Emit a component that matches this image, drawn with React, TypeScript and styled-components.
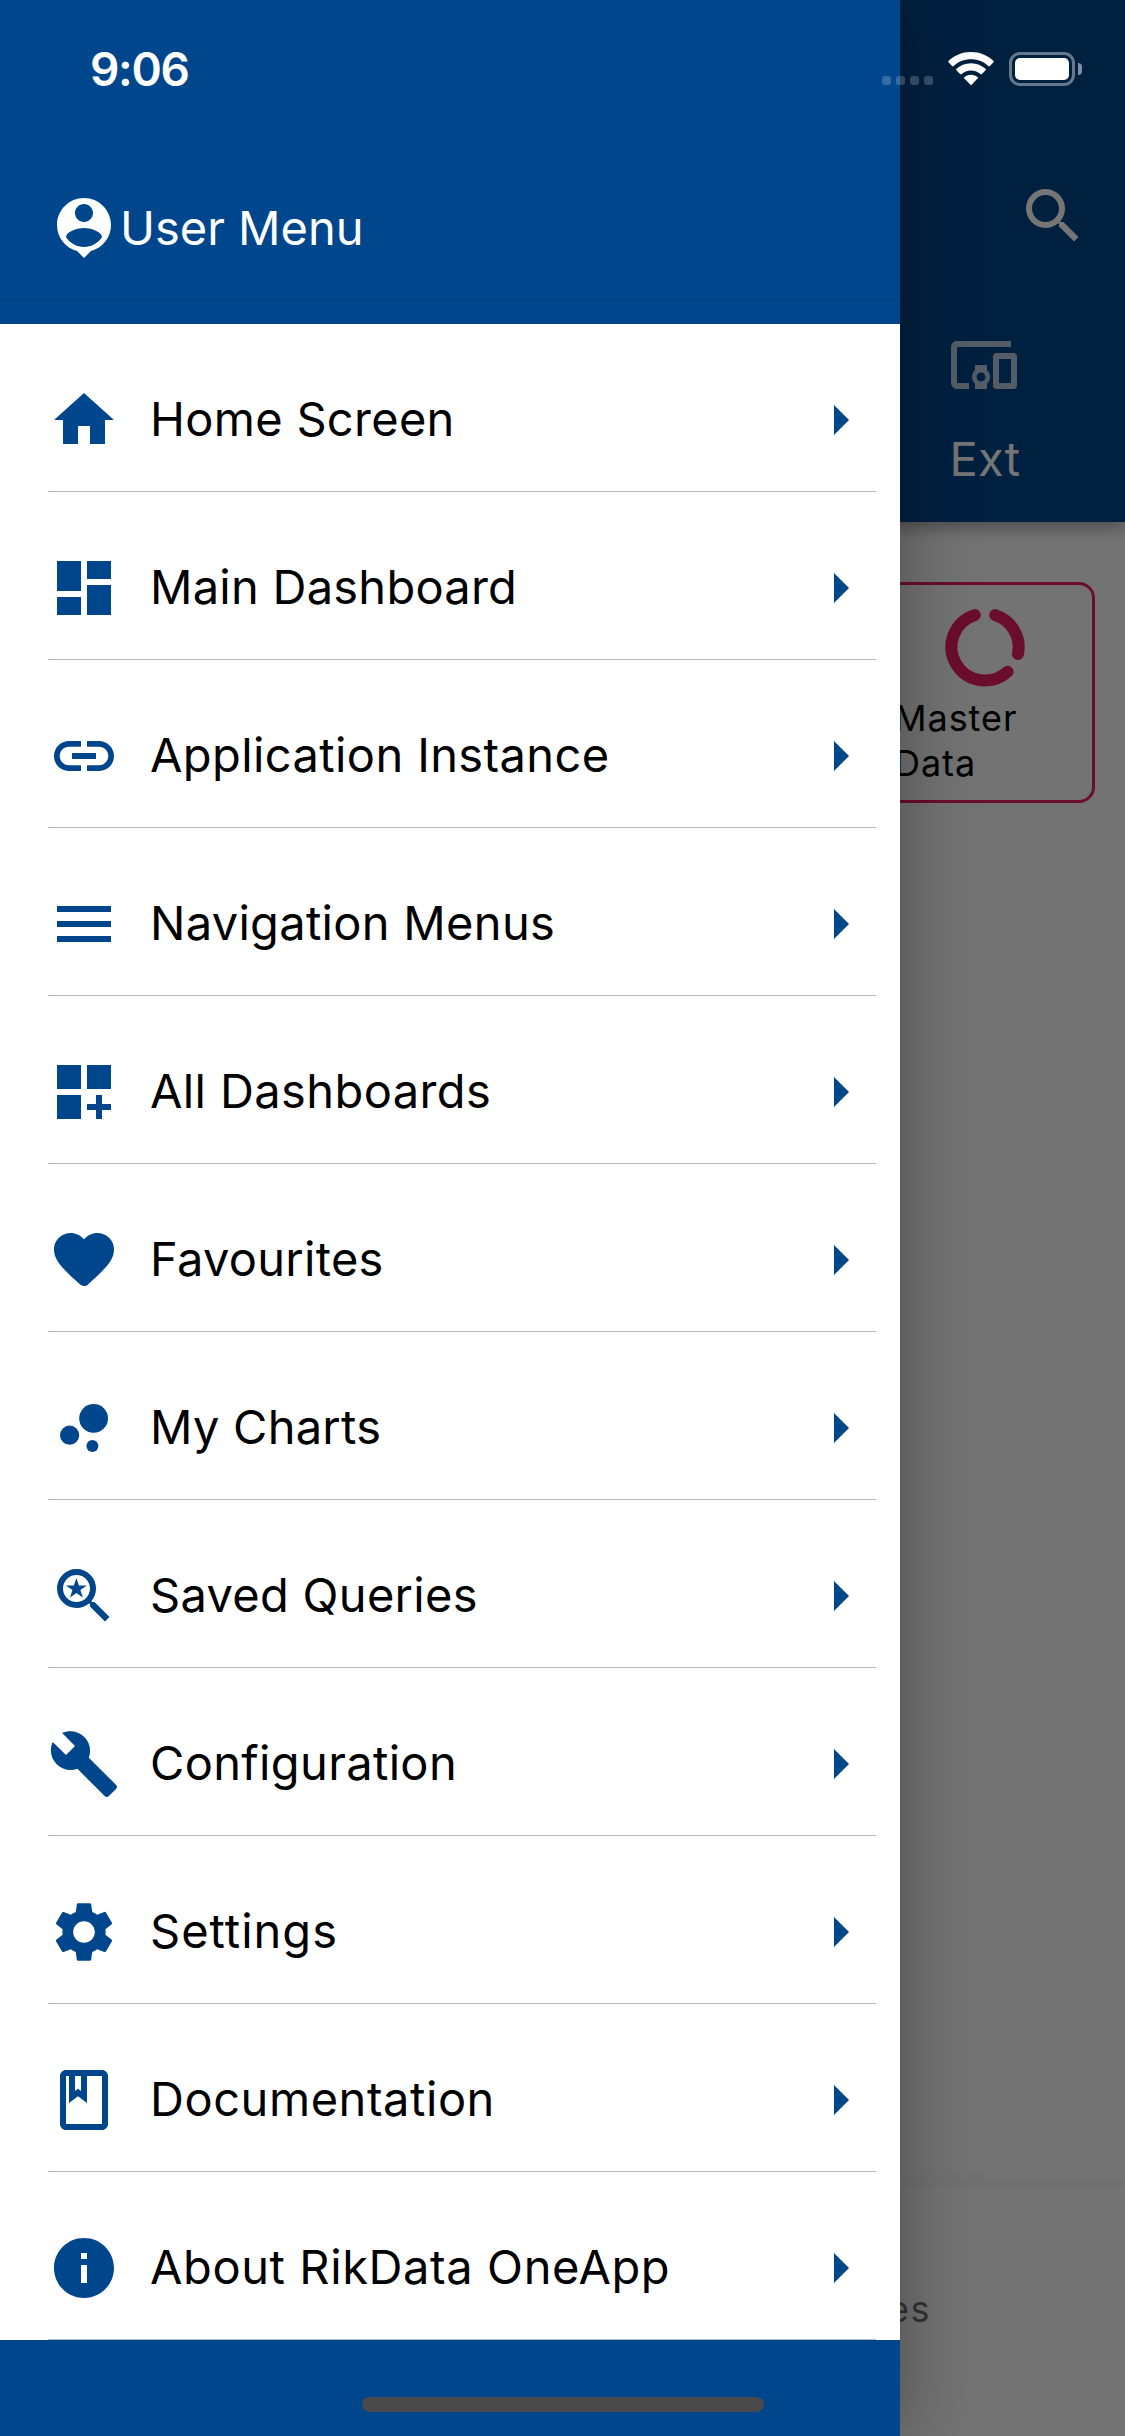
import React from "react";
import styled, { createGlobalStyle } from "styled-components";
import type { IconType } from "react-icons";
import {
  MdArrowRight,
  MdBubbleChart,
  MdBuild,
  MdDashboard,
  MdDashboardCustomize,
  MdDevicesOther,
  MdHome,
  MdInfo,
  MdLink,
  MdMenu,
  MdOutlineClass,
  MdSavedSearch,
  MdSearch,
  MdSettings,
} from "react-icons/md";

const BLUE = "#00468c";
const PINK = "#e91e63";

const GlobalStyle = createGlobalStyle`
  * { box-sizing: border-box; }
  body {
    margin: 0;
    font-family: Inter, "Liberation Sans", sans-serif;
    color: #000;
  }
`;

const Screen = styled.main`
  position: relative;
  width: 1125px;
  height: 2436px;
  overflow: hidden;
  background: #fafafa;
`;

const Page = styled.div`
  display: flex;
  flex-direction: column;
  height: 100%;
`;

const AppBar = styled.header`
  display: flex;
  flex-direction: column;
  align-items: flex-end;
  height: 522px;
  padding-top: 180px;
  background: ${BLUE};
  color: #fff;
  box-shadow: 0 6px 15px rgba(0, 0, 0, 0.32);
`;

const SearchButton = styled.div`
  display: flex;
  padding-right: 36px;
`;

const Tab = styled.div`
  display: flex;
  flex-direction: column;
  align-items: center;
  width: 282px;
  margin-top: 77px;
`;

const TabIcon = styled.span`
  display: flex;
  opacity: 0.72;
`;

const TabLabel = styled.span`
  margin: 30px 0 0 2px;
  font-size: 47px;
  line-height: 56px;
  letter-spacing: 0.2px;
`;

const Content = styled.section`
  display: flex;
  flex: 1;
  align-items: flex-start;
  justify-content: flex-end;
  padding: 60px 30px 0 0;
`;

const Card = styled.article`
  display: flex;
  flex-direction: column;
  align-items: center;
  width: 220px;
  height: 221px;
  padding-top: 17px;
  border: 3px solid ${PINK};
  border-radius: 16px;
`;

const CardLabel = styled.span`
  width: 182px;
  margin-top: 4px;
  font-size: 36px;
  line-height: 45px;
  letter-spacing: 0.95px;
`;

const BottomBar = styled.footer`
  display: flex;
  height: 249px;
  padding: 100px 0 0 888px;
  background: #fbfbfb;
  box-shadow: 0 0 18px rgba(0, 0, 0, 0.07);
`;

const BottomLabel = styled.span`
  font-size: 36px;
  line-height: 44px;
  letter-spacing: 1.4px;
  color: rgba(0, 0, 0, 0.56);
`;

const Scrim = styled.div`
  position: absolute;
  inset: 0;
  background: rgba(0, 0, 0, 0.54);
`;

const Drawer = styled.aside`
  position: absolute;
  inset: 0 auto 0 0;
  display: flex;
  flex-direction: column;
  width: 900px;
  background: ${BLUE};
  box-shadow: 0 0 70px rgba(0, 0, 0, 0.34);
`;

const DrawerHeader = styled.div`
  display: flex;
  align-items: center;
  height: 301px;
  margin-bottom: 23px;
  padding: 156px 48px 0;
  border-bottom: 2px solid #004388;
  color: #fff;
`;

const HeaderTitle = styled.h1`
  margin: 0;
  font-size: 47px;
  font-weight: 400;
  line-height: 56px;
`;

const MenuList = styled.nav`
  display: flex;
  flex-direction: column;
  padding: 0 24px 0 48px;
  background: #fff;
`;

const MenuRow = styled.div`
  display: flex;
  align-items: center;
  height: 168px;
  padding-top: 25px;
  border-bottom: 1px solid #b0bec5;
  color: ${BLUE};
`;

const MenuLabel = styled.span<{ $tracking: number }>`
  flex: 1;
  padding: 0 0 3px 30px;
  font-size: 47px;
  line-height: 56px;
  letter-spacing: ${(p) => p.$tracking}px;
  color: #000;
`;

const StatusBar = styled.div`
  position: absolute;
  inset: 0 0 auto 0;
  display: flex;
  align-items: flex-start;
  justify-content: space-between;
  height: 132px;
  padding: 52px 43px 0 90px;
  color: #fff;
`;

const Clock = styled.time`
  margin-top: -10px;
  font-size: 46px;
  font-weight: 600;
  line-height: 54px;
  letter-spacing: -1.3px;
`;

const StatusIcons = styled.div`
  display: flex;
  align-items: flex-start;
`;

const SignalDots = styled.div`
  display: flex;
  gap: 5px;
  margin: 24px 15px 0 0;
`;

const Dot = styled.i`
  width: 9px;
  height: 9px;
  border-radius: 3px;
  background: rgba(255, 255, 255, 0.2);
`;

const Battery = styled.div`
  width: 66px;
  height: 34px;
  margin-left: 15px;
  padding: 3px;
  border: 3px solid rgba(255, 255, 255, 0.4);
  border-radius: 11px;
`;

const BatteryLevel = styled.div`
  height: 100%;
  border-radius: 5px;
  background: #fff;
`;

const BatteryCap = styled.div`
  width: 4px;
  height: 12px;
  margin: 11px 0 0 3px;
  border-radius: 0 4px 4px 0;
  background: rgba(255, 255, 255, 0.5);
`;

const HomeIndicator = styled.div`
  position: absolute;
  bottom: 24px;
  left: 362px;
  width: 402px;
  height: 15px;
  border-radius: 8px;
  background: #4a4a4a;
`;

const PersonPin = () => (
  <svg width="72" height="72" viewBox="0 0 24 24" fill="currentColor">
    <path d="M12 2c-4.97 0-9 4.03-9 9 0 4.17 2.84 7.67 6.69 8.69L12 22l2.31-2.31C18.16 18.67 21 15.17 21 11c0-4.97-4.03-9-9-9zm0 2c1.66 0 3 1.34 3 3s-1.34 3-3 3-3-1.34-3-3 1.34-3 3-3zm0 14.3c-2.5 0-4.71-1.28-6-3.22.03-1.99 4-3.08 6-3.08 1.99 0 5.97 1.09 6 3.08-1.29 1.94-3.5 3.22-6 3.22z" />
  </svg>
);

const RoundedHeart = ({ size }: { size?: number | string }) => (
  <svg width={size} height={size} viewBox="0 0 24 24" fill="currentColor">
    <path d="M13.35 20.13c-.76.69-1.93.69-2.69-.01l-.11-.1C5.3 15.27 1.87 12.16 2 8.28c.06-1.7.93-3.33 2.34-4.29 2.64-1.8 5.9-.96 7.66 1.1 1.76-2.06 5.02-2.91 7.66-1.1 1.41.96 2.28 2.59 2.34 4.29.14 3.88-3.3 6.99-8.55 11.76l-.1.09z" />
  </svg>
);

const DataRing = () => (
  <svg width="90" height="90" viewBox="0 0 90 90" fill="none" stroke={PINK} strokeWidth="12" strokeLinecap="round">
    <path d="M55.2 13.1A33.5 33.5 0 0 1 77.9 52" />
    <path d="M67.6 69.7A33.5 33.5 0 1 1 34.8 13.1" />
  </svg>
);

const Wifi = () => (
  <svg width="46" height="34" viewBox="0 0 46 34" fill="#fff">
    <path d="M23 0C14.2 0 6.300 3.400.4 9l-.1 1 4 4.200h1C10 9.800 16.200 7.200 23 7.200s13 2.600 17.700 7h1l4-4.200-.1-1C39.700 3.400 31.800 0 23 0z" />
    <path d="M23 11.300c-5.700 0-10.900 2.200-14.800 5.800v1l4.100 4.200h1c2.600-2.300 6-3.700 9.700-3.700s7.100 1.400 9.700 3.700h1l4.100-4.200v-1c-3.900-3.600-9.100-5.800-14.800-5.800z" />
    <path d="M23 22.700c-2.600 0-5 1-6.800 2.600v1l6.200 6.400q.6.600 1.200 0l6.200-6.400v-1c-1.800-1.600-4.200-2.600-6.800-2.600z" />
  </svg>
);

type MenuItem = {
  label: string;
  icon: IconType | typeof RoundedHeart;
  tracking: number;
};

const menuItems: MenuItem[] = [
  { label: "Home Screen", icon: MdHome, tracking: 0.3 },
  { label: "Main Dashboard", icon: MdDashboard, tracking: 0.25 },
  { label: "Application Instance", icon: MdLink, tracking: 0.4 },
  { label: "Navigation Menus", icon: MdMenu, tracking: 0.3 },
  { label: "All Dashboards", icon: MdDashboardCustomize, tracking: 0.4 },
  { label: "Favourites", icon: RoundedHeart, tracking: 0.3 },
  { label: "My Charts", icon: MdBubbleChart, tracking: 0.25 },
  { label: "Saved Queries", icon: MdSavedSearch, tracking: 0.3 },
  { label: "Configuration", icon: MdBuild, tracking: 0.35 },
  { label: "Settings", icon: MdSettings, tracking: 1 },
  { label: "Documentation", icon: MdOutlineClass, tracking: 0.55 },
  { label: "About RikData OneApp", icon: MdInfo, tracking: 0.6 },
];

export default function App() {
  return (
    <>
      <GlobalStyle />
      <Screen>
        <Page>
          <AppBar>
            <SearchButton>
              <MdSearch size={72} />
            </SearchButton>
            <Tab>
              <TabIcon>
                <MdDevicesOther size={72} />
              </TabIcon>
              <TabLabel>Ext</TabLabel>
            </Tab>
          </AppBar>
          <Content>
            <Card>
              <DataRing />
              <CardLabel>
                Master
                <br />
                Data
              </CardLabel>
            </Card>
          </Content>
          <BottomBar>
            <BottomLabel>es</BottomLabel>
          </BottomBar>
        </Page>
        <Scrim />
        <Drawer>
          <DrawerHeader>
            <PersonPin />
            <HeaderTitle>User Menu</HeaderTitle>
          </DrawerHeader>
          <MenuList>
            {menuItems.map(({ label, icon: Icon, tracking }) => (
              <MenuRow key={label}>
                <Icon size={72} />
                <MenuLabel $tracking={tracking}>{label}</MenuLabel>
                <MdArrowRight size={72} />
              </MenuRow>
            ))}
          </MenuList>
        </Drawer>
        <StatusBar>
          <Clock>9:06</Clock>
          <StatusIcons>
            <SignalDots>
              <Dot />
              <Dot />
              <Dot />
              <Dot />
            </SignalDots>
            <Wifi />
            <Battery>
              <BatteryLevel />
            </Battery>
            <BatteryCap />
          </StatusIcons>
        </StatusBar>
        <HomeIndicator />
      </Screen>
    </>
  );
}
